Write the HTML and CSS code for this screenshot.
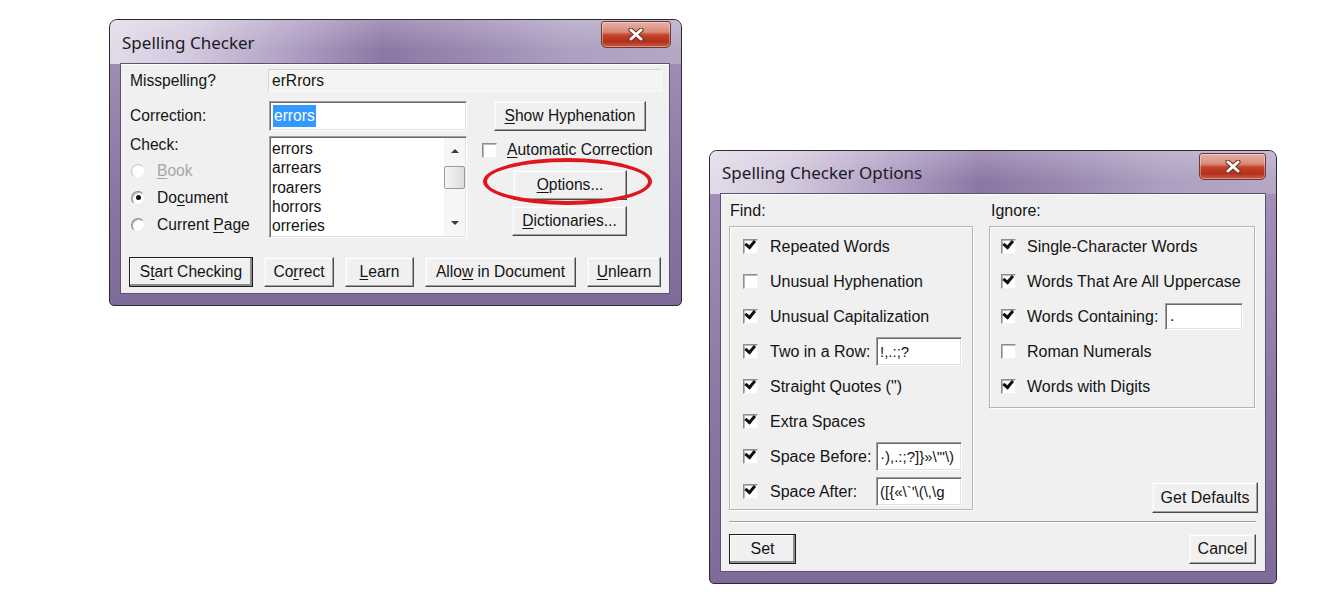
FILE: index.html
```html
<!DOCTYPE html>
<html lang="en">
<head>
    <meta charset="UTF-8">
    <meta name="viewport" content="width=device-width, initial-scale=1.0">
    <title>Spelling Checker</title>
    <link rel="stylesheet" href="styles.css">
</head>
<body>
<div class="desktop">

    <!-- main spelling dialog -->
    <div class="window checker">
        <div class="titlebar">
            <span class="title">Spelling Checker</span>
            <button class="close" aria-label="Close">
                <svg width="16" height="13" viewBox="0 0 16 13"><path d="M3 2 L13 11 M13 2 L3 11" stroke="#6b2a22" stroke-width="5" stroke-linecap="round"/><path d="M3 2 L13 11 M13 2 L3 11" stroke="#fff" stroke-width="3" stroke-linecap="round"/></svg>
            </button>
        </div>
        <div class="client main">
            <div class="row">
                <span class="label">Misspelling?</span>
                <div class="readonly">erRrors</div>
            </div>
            <div class="row correction-row">
                <span class="label">Correction:</span>
                <div class="edit correction"><span class="sel">errors</span></div>
                <button class="btn hyphen"><u>S</u>how Hyphenation</button>
            </div>
            <div class="row body-row">
                <div class="check-col">
                    <div class="check-title">Check:</div>
                    <div class="radios">
                        <label class="radio disabled"><span class="dot"></span><span><u>B</u>ook</span></label>
                        <label class="radio"><span class="dot on"></span><span>Do<u>c</u>ument</span></label>
                        <label class="radio"><span class="dot"></span><span>Current <u>P</u>age</span></label>
                    </div>
                </div>
                <div class="edit listbox">
                    <ul class="items">
                        <li>errors</li>
                        <li>arrears</li>
                        <li>roarers</li>
                        <li>horrors</li>
                        <li>orreries</li>
                    </ul>
                    <div class="scrollbar">
                        <span class="arrow"><i class="up"></i></span>
                        <span class="thumb"></span>
                        <span class="arrow"><i class="down"></i></span>
                    </div>
                </div>
                <div class="side-col">
                    <label class="check auto"><span class="box"></span><span><u>A</u>utomatic Correction</span></label>
                    <div class="ring-wrap">
                        <button class="btn side"><u>O</u>ptions...</button>
                        <span class="ring"></span>
                    </div>
                    <button class="btn side"><u>D</u>ictionaries...</button>
                </div>
            </div>
            <div class="row actions">
                <button class="btn default start">S<u>t</u>art Checking</button>
                <button class="btn correct">Co<u>r</u>rect</button>
                <button class="btn learn"><u>L</u>earn</button>
                <button class="btn allow">Allo<u>w</u> in Document</button>
                <button class="btn unlearn"><u>U</u>nlearn</button>
            </div>
        </div>
    </div>

    <!-- options dialog -->
    <div class="window options">
        <div class="titlebar">
            <span class="title">Spelling Checker Options</span>
            <button class="close" aria-label="Close">
                <svg width="16" height="13" viewBox="0 0 16 13"><path d="M3 2 L13 11 M13 2 L3 11" stroke="#6b2a22" stroke-width="5" stroke-linecap="round"/><path d="M3 2 L13 11 M13 2 L3 11" stroke="#fff" stroke-width="3" stroke-linecap="round"/></svg>
            </button>
        </div>
        <div class="client opts">
            <div class="opt-top">
                <div class="opt-col">
                    <div class="group-label">Find:</div>
                    <div class="group find">
                        <label class="check"><span class="box on"></span><span>Repeated Words</span></label>
                        <label class="check"><span class="box"></span><span>Unusual Hyphenation</span></label>
                        <label class="check"><span class="box on"></span><span>Unusual Capitalization</span></label>
                        <label class="check"><span class="box on"></span><span>Two in a Row:</span><span class="edit chars">!,.:;?</span></label>
                        <label class="check"><span class="box on"></span><span>Straight Quotes (")</span></label>
                        <label class="check"><span class="box on"></span><span>Extra Spaces</span></label>
                        <label class="check"><span class="box on"></span><span>Space Before:</span><span class="edit chars">·),.:;?]}»\'"\)</span></label>
                        <label class="check"><span class="box on"></span><span>Space After:</span><span class="edit chars">([{«\`'\(\,\g</span></label>
                    </div>
                </div>
                <div class="opt-col ignore-col">
                    <div class="group-label">Ignore:</div>
                    <div class="group ignore">
                        <label class="check"><span class="box on"></span><span>Single-Character Words</span></label>
                        <label class="check"><span class="box on"></span><span>Words That Are All Uppercase</span></label>
                        <label class="check"><span class="box on"></span><span>Words Containing:</span><span class="edit containing">.</span></label>
                        <label class="check"><span class="box"></span><span>Roman Numerals</span></label>
                        <label class="check"><span class="box on"></span><span>Words with Digits</span></label>
                    </div>
                    <button class="btn defaults">Get Defaults</button>
                </div>
            </div>
            <div class="separator"></div>
            <div class="opt-actions">
                <button class="btn default small">Set</button>
                <button class="btn small">Cancel</button>
            </div>
        </div>
    </div>

</div>
</body>
</html>
```

FILE: styles.css
```css
body { margin: 0; background: #fff; font-family: "Liberation Sans", Arial, sans-serif; font-size: 15px; color: #141414; }
.desktop { position: relative; width: 1341px; height: 602px; overflow: hidden; }

/* window frame */
.window { position: absolute; box-sizing: border-box; display: flex; flex-direction: column; border: 1px solid #2e2935; border-radius: 8px 8px 5px 5px; background: linear-gradient(to bottom, #a594ba, #8a77a3 60%, #7f6b99); }
.checker { left: 109px; top: 19px; width: 573px; height: 287px; font-size: 15.6px; }
.options { left: 709px; top: 150px; width: 568px; height: 434px; font-size: 16px; }

.titlebar { display: flex; align-items: flex-start; height: 44px; flex-shrink: 0; padding: 0 10px 0 12px; border-radius: 7px 7px 0 0;
    background:
        linear-gradient(to bottom, rgba(255,255,255,0.22), rgba(255,255,255,0) 70%),
        linear-gradient(to right, #e2dbe8 0%, #d3c9dd 14%, #ab99bf 34%, #8c77a4 48%, #9a87b0 62%, #ad9fc0 80%, #b4a8c5 100%); }
.options .titlebar { height: 43px; }
.title { align-self: center; font-family: "Noto Sans", sans-serif; font-size: 17px; color: #1d1924; }

.close { margin-left: auto; margin-top: 1px; width: 70px; height: 27px; padding: 0; display: flex; align-items: center; justify-content: center;
    border: 1px solid #6a3a3a; border-radius: 3px 3px 5px 5px;
    background: linear-gradient(to bottom, #e7b0a4 0%, #d98a78 40%, #c4442c 52%, #b5301a 78%, #cf5a3f 100%);
    box-shadow: inset 0 0 0 1px rgba(255,255,255,0.35); }
.options .close { width: 67px; margin-top: 2px; }

.client { margin: 0 12px 0 11px; box-sizing: border-box; background: #f0f0f0; box-shadow: 0 0 0 1px #5f4f77, inset 0 1px 0 #fff; }
.options .client { margin: 0 11px; }

/* shared controls */
.btn { box-sizing: border-box; height: 30px; padding: 0; font: inherit; color: #141414; background: #f0f0f0; white-space: nowrap;
    border: 1px solid; border-color: #f4f4f4 #4a4a4a #4a4a4a #f4f4f4; box-shadow: inset -1px -1px 0 #a0a0a0, inset 1px 1px 0 #fff; }
.btn.default { border-color: #1c1c1c; box-shadow: inset -2px -2px 0 #8c8c8c, inset 1px 1px 0 #fff; }

.edit { box-sizing: border-box; background: #fff; border: 1px solid; border-color: #a0a0a0 #fff #fff #a0a0a0; box-shadow: inset 1px 1px 0 #6a6a6a, inset -1px -1px 0 #e3e3e3; }

.check { display: flex; align-items: center; white-space: nowrap; }
.box { position: relative; box-sizing: border-box; width: 15px; height: 15px; flex-shrink: 0; margin-right: 11px; background: #fff;
    border: 1px solid; border-color: #8d8d8d #f2f2f2 #f2f2f2 #8d8d8d; box-shadow: inset 1px 1px 0 #b9b9b9; }
.box.on::after { content: ""; position: absolute; left: 3px; top: 1px; width: 7px; height: 4px; border: solid #111; border-width: 0 0 3px 3px; transform: rotate(-50deg); transform-origin: 30% 70%; }

u { text-decoration: underline; text-underline-offset: 2px; }

/* spelling checker body */
.main { height: 229px; padding: 5px 7px 0 9px; }
.row { display: flex; align-items: center; }
.label { width: 138px; flex-shrink: 0; }
.readonly { flex: 1; height: 23px; box-sizing: border-box; padding-left: 3px; display: flex; align-items: center; background: #f4f4f4; border: 1px solid; border-color: #d6d6d6 #fafafa #fafafa #d6d6d6; }

.correction-row { margin-top: 9px; height: 30px; }
.correction-row .label { width: 139px; }
.correction { width: 198px; height: 30px; padding: 3px 0 0 3px; }
.sel { display: inline-block; height: 22px; line-height: 22px; padding: 0 1px; background: #3399ff; color: #fff; }
.hyphen { margin-left: 27px; width: 152px; }

.body-row { margin-top: 5px; align-items: flex-start; height: 102px; }
.check-col { width: 139px; flex-shrink: 0; }
.check-title { line-height: 18px; }
.radios { margin-top: 3px; }
.radio { display: flex; align-items: center; height: 27px; white-space: nowrap; }
.radio.disabled { color: #a6a6a6; }
.dot { position: relative; box-sizing: border-box; width: 14px; height: 14px; margin: 0 12px 0 1px; border-radius: 50%; background: #fff;
    border: 1px solid; border-color: #8a8a8a #ececec #ececec #8a8a8a; box-shadow: inset 1px 1px 0 #b0b0b0; }
.radio.disabled .dot { border-color: #c4c4c4 #f2f2f2 #f2f2f2 #c4c4c4; box-shadow: none; }
.dot.on::after { content: ""; position: absolute; left: 3.5px; top: 3.5px; width: 5px; height: 5px; border-radius: 50%; background: #111; }

.listbox { display: flex; width: 198px; height: 102px; }
.items { flex: 1; margin: 0; padding: 2px 0 0 2px; list-style: none; line-height: 19.3px; overflow: hidden; }
.scrollbar { width: 21px; margin: 1px 1px 1px 0; display: flex; flex-direction: column; background: #f6f6f6; }
.arrow { height: 26px; display: flex; align-items: center; justify-content: center; }
.arrow i { width: 0; height: 0; border-left: 4px solid transparent; border-right: 4px solid transparent; }
.arrow .up { border-bottom: 4px solid #3c3c3c; }
.arrow .down { border-top: 4px solid #3c3c3c; }
.thumb { height: 23px; margin: 2px 0 auto; box-sizing: border-box; border: 1px solid #9a9a9a; border-radius: 2px; background: linear-gradient(to right, #f6f6f6, #dcdcdc); }

.side-col { margin-left: 15px; display: flex; flex-direction: column; align-items: flex-start; }
.auto { height: 28px; }
.auto .box { margin-right: 10px; }
.ring-wrap { position: relative; margin: 6px 0 0 31px; }
.side { width: 114px; }
.ring-wrap + .side { margin: 6px 0 0 30px; width: 115px; }
.ring { position: absolute; left: -30px; top: -12px; width: 169px; height: 47px; box-sizing: border-box; border: 4px solid #e0161d; border-radius: 50%; pointer-events: none; }

.actions { margin: 19px 0 0 -1px; gap: 11px; }
.start { width: 124px; }
.correct { width: 70px; }
.learn { width: 69px; }
.allow { width: 151px; }
.unlearn { width: 74px; }

/* options body */
.opts { height: 377px; padding: 0 9px 0 8px; }
.opt-top { display: grid; grid-template-columns: 244px 266px; column-gap: 16px; }
.group-label { box-sizing: border-box; height: 32px; padding: 8px 0 0 1px; line-height: 18px; }
.ignore-col .group-label { padding-left: 2px; }
.group { box-sizing: border-box; border: 1px solid #b4b4b4; box-shadow: inset 1px 1px 0 #fff, 1px 1px 0 #fff; }
.group .check { height: 35px; }
.find { height: 284px; padding: 2px 10px 0 13px; }
.find .box { margin-right: 12px; }
.ignore { height: 182px; padding: 2px 11px 0 11px; }
.chars { margin-left: auto; flex-shrink: 0; width: 86px; height: 29px; padding-left: 3px; display: flex; align-items: center; overflow: hidden; white-space: nowrap; font-size: 15px; }
.containing { margin-left: auto; flex-shrink: 0; width: 78px; height: 27px; padding: 0 0 4px 4px; display: flex; align-items: flex-end; }

.ignore-col { display: flex; flex-direction: column; }
.defaults { margin: auto -3px -3px 0; align-self: flex-end; width: 106px; height: 31px; }

.separator { margin-top: 11px; border-top: 1px solid #a0a0a0; border-bottom: 1px solid #fff; }
.opt-actions { display: flex; justify-content: space-between; margin-top: 11px; }
.small { width: 67px; }
```
